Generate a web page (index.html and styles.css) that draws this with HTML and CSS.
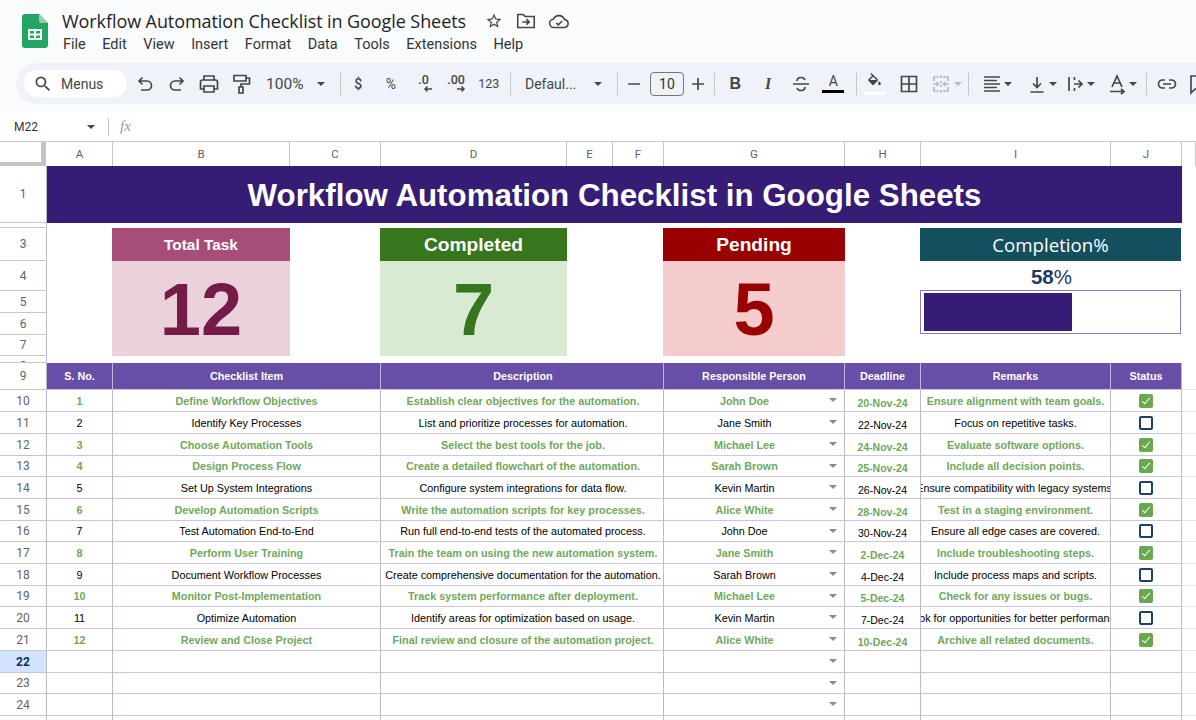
FILE: index.html
```html
<!DOCTYPE html>
<html lang="en">
<head>
  <meta charset="UTF-8">
  <title>Workflow Automation Checklist in Google Sheets</title>
  <link rel="stylesheet" href="styles.css">
</head>
<body>

  <header class="titlebar">
    <svg class="logo" viewBox="0 0 26 34">
      <path d="M3 0h14l9 9v22a3 3 0 0 1-3 3H3a3 3 0 0 1-3-3V3a3 3 0 0 1 3-3z" fill="#23a566"/>
      <path d="M17 0l9 9h-7a2 2 0 0 1-2-2z" fill="#8ed1b1"/>
      <path d="M6 15h14v11H6zM8 17v2.500h4V17zm6 0v2.500h4V17zm-6 4.500V24h4v-2.500zm6 0V24h4v-2.500z" fill="#fff" fill-rule="evenodd"/>
    </svg>
    <div class="docinfo">
      <div class="docname">
        <span class="doctitle">Workflow Automation Checklist in Google Sheets</span>
        <svg class="ico star" viewBox="0 0 24 24"><path d="M22 9.240l-7.190-.62L12 2 9.190 8.630 2 9.240l5.460 4.730L5.820 21 12 17.270 18.180 21l-1.630-7.030L22 9.240zM12 15.400l-3.760 2.270 1-4.280-3.320-2.880 4.380-.38L12 6.100l1.710 4.040 4.380.38-3.320 2.880 1 4.280L12 15.400z"/></svg>
        <svg class="ico line move" viewBox="0 0 24 24"><path d="M3 5h6l2 2h10v12H3zM8 13h7M12.500 10l3 3-3 3"/></svg>
        <svg class="ico line cloud" viewBox="0 0 24 24"><path d="M6.500 19a4.500 4.500 0 0 1-.6-9A6.500 6.500 0 0 1 18 10.500a4.300 4.300 0 0 1 .5 8.500zM9 14l2.200 2.200L15.500 12"/></svg>
      </div>
      <nav class="menus">
        <span>File</span><span>Edit</span><span>View</span><span>Insert</span><span>Format</span><span>Data</span><span>Tools</span><span>Extensions</span><span>Help</span>
      </nav>
    </div>
  </header>

  <div class="toolbar-wrap">
    <div class="toolbar">
      <div class="search">
        <svg class="ico dark" viewBox="0 0 24 24"><path d="M15.500 14h-.79l-.28-.27A6.470 6.470 0 0 0 16 9.500 6.500 6.500 0 1 0 9.500 16c1.610 0 3.090-.59 4.230-1.570l.27.28v.79l5 4.990L20.490 19l-4.990-5zm-6 0C7.010 14 5 11.990 5 9.500S7.010 5 9.500 5 14 7.010 14 9.500 11.990 14 9.500 14z"/></svg>
        <span>Menus</span>
      </div>
      <span class="tool"><svg class="ico line" viewBox="0 0 24 24"><path d="M9.500 5.500L6 9l3.500 3.500M6 9h8a4.500 4.500 0 0 1 0 9H8"/></svg></span>
      <span class="tool"><svg class="ico line" viewBox="0 0 24 24"><path d="M14.500 5.500L18 9l-3.500 3.500M18 9h-8a4.500 4.500 0 0 0 0 9h6"/></svg></span>
      <span class="tool"><svg class="ico line" viewBox="0 0 24 24"><path d="M7 8V4h10v4M7 17H3.500v-7a2 2 0 0 1 2-2h13a2 2 0 0 1 2 2v7H17M7 14h10v6H7z"/></svg></span>
      <span class="tool"><svg class="ico line" viewBox="0 0 24 24"><path d="M5 3.500h12v5.500H5zM17 6h3.500v6h-8.500v3M10 15h4v6h-4z"/></svg></span>
      <span class="tool zoom"><span>100%</span><i class="caret"></i></span>
      <i class="sep sep-zoom"></i>
      <span class="tool num heavy">$</span>
      <span class="tool num">%</span>
      <span class="tool num dec">.0<svg viewBox="0 0 10 8"><path d="M9 4H2M4.500 1.500L2 4l2.500 2.500"/></svg></span>
      <span class="tool num dec">.00<svg viewBox="0 0 10 8"><path d="M1 4h7M5.500 1.500L8 4 5.500 6.500"/></svg></span>
      <span class="tool num small">123</span>
      <i class="sep sep-num"></i>
      <span class="tool font"><span>Defaul...</span><i class="caret"></i></span>
      <i class="sep sep-font"></i>
      <span class="tool"><svg class="ico line" viewBox="0 0 24 24"><path d="M6 12h12"/></svg></span>
      <span class="sizebox">10</span>
      <span class="tool plus"><svg class="ico line" viewBox="0 0 24 24"><path d="M6 12h12M12 6v12"/></svg></span>
      <i class="sep sep-size"></i>
      <span class="tool fmt glyph bold">B</span>
      <span class="tool fmt glyph italic">I</span>
      <span class="tool fmt"><svg class="ico line" viewBox="0 0 24 24"><path d="M4 12h16M8 9C8 6.500 10 5.500 12 5.500s3.500.8 4 2.500M16 15c0 2.500-2 3.500-4 3.500s-3.500-.8-4-2.500"/></svg></span>
      <span class="tool fmt colour"><span>A</span><i class="swatch black"></i></span>
      <i class="sep sep-color"></i>
      <span class="tool cell-tool colour"><svg class="ico dark bucket" viewBox="0 0 24 24"><path d="M16.560 8.940L7.620 0 6.210 1.410l2.380 2.380-5.150 5.150c-.59.59-.59 1.540 0 2.120l5.500 5.500c.29.290.68.440 1.060.440s.77-.15 1.060-.44l5.500-5.500c.59-.58.59-1.530 0-2.120zM5.210 10L10 5.210 14.790 10H5.210zM19 11.500s-2 2.170-2 3.500c0 1.100.9 2 2 2s2-.9 2-2c0-1.330-2-3.500-2-3.500z"/></svg><i class="swatch white"></i></span>
      <span class="tool cell-tool"><svg class="ico line" viewBox="0 0 24 24"><path d="M4.500 4.500h15v15h-15zM12 4.500v15M4.500 12h15"/></svg></span>
      <span class="tool merge"><svg class="ico line off" viewBox="0 0 24 24"><path d="M5 9V5h5M14 5h5v4M5 15v4h5M14 19h5v-4M12 3v3M12 9v2M12 13v2M12 18v3M4 12h5M7.500 10L9.500 12l-2 2M20 12h-5M16.500 10l-2 2 2 2"/></svg><i class="caret off"></i></span>
      <i class="sep sep-merge"></i>
      <span class="tool pick pick-1"><svg class="ico line" viewBox="0 0 24 24"><path d="M4 5h16M4 8.500h13M4 12h16M4 15.500h13M4 19h16"/></svg><i class="caret"></i></span>
      <span class="tool pick pick-2"><svg class="ico line" viewBox="0 0 24 24"><path d="M5.500 20h13M12 5v10M8 11.500l4 4 4-4"/></svg><i class="caret"></i></span>
      <span class="tool pick pick-3"><svg class="ico line" viewBox="0 0 24 24"><path d="M6 5v14M11.500 5v3M11.500 16v3M11 12h8M15.500 8.500L19 12l-3.500 3.500"/></svg><i class="caret"></i></span>
      <span class="tool pick pick-4"><svg class="ico line" viewBox="0 0 24 24"><path d="M7 15l5-11 5 11M9 11h6M5 19.500h13M16 17l3 2.500-3 2.500"/></svg><i class="caret"></i></span>
      <i class="sep sep-pick"></i>
      <span class="tool"><svg class="ico line" viewBox="0 0 24 24"><path d="M10 8H7.500a4 4 0 0 0 0 8H10M14 8h2.500a4 4 0 0 1 0 8H14M8 12h8"/></svg></span>
      <span class="tool"><svg class="ico line" viewBox="0 0 24 24"><path d="M4 4h16v13H8l-4 4zM12 7.500v6M9 10.500h6"/></svg></span>
    </div>
  </div>

  <div class="formulabar">
    <span class="cellref">M22</span>
    <i class="caret"></i>
    <i class="sep"></i>
    <span class="fx">fx</span>
  </div>

  <main class="sheet">
    <div class="colheads">
      <span class="corner"></span>
      <span>A</span><span>B</span><span>C</span><span>D</span><span>E</span><span>F</span><span>G</span><span>H</span><span>I</span><span>J</span><span></span>
    </div>

    <section class="dash">
      <span class="rh r1">1</span>
      <span class="rh r2 cut">2</span>
      <span class="rh r3">3</span>
      <span class="rh r4">4</span>
      <span class="rh r5">5</span>
      <span class="rh r6">6</span>
      <span class="rh r7">7</span>
      <span class="rh r8 cut">8</span>

      <h1 class="banner">Workflow Automation Checklist in Google Sheets</h1>

      <div class="kpi-head total">Total Task</div>
      <div class="kpi-value total">12</div>
      <div class="kpi-head completed">Completed</div>
      <div class="kpi-value completed">7</div>
      <div class="kpi-head pending">Pending</div>
      <div class="kpi-value pending">5</div>

      <div class="kpi-head percent">Completion%</div>
      <div class="percent-value"><b>58</b>%</div>
      <div class="progress"><div class="progress-fill" style="width:58%"></div></div>
    </section>

    <section class="checklist">
      <div class="row head">
        <span class="rh">9</span>
        <span class="cell">S. No.</span><span class="cell wide">Checklist Item</span><span class="cell wider">Description</span><span class="cell">Responsible Person</span><span class="cell">Deadline</span><span class="cell">Remarks</span><span class="cell">Status</span><span class="cell spare"></span>
      </div>
      <div class="row done">
        <span class="rh">10</span>
        <span class="cell">1</span><span class="cell wide">Define Workflow Objectives</span><span class="cell wider">Establish clear objectives for the automation.</span><span class="cell person">John Doe</span><span class="cell date">20-Nov-24</span><span class="cell">Ensure alignment with team goals.</span><span class="cell"><i class="box on"></i></span><span class="cell spare"></span>
      </div>
      <div class="row">
        <span class="rh">11</span>
        <span class="cell">2</span><span class="cell wide">Identify Key Processes</span><span class="cell wider">List and prioritize processes for automation.</span><span class="cell person">Jane Smith</span><span class="cell date">22-Nov-24</span><span class="cell">Focus on repetitive tasks.</span><span class="cell"><i class="box"></i></span><span class="cell spare"></span>
      </div>
      <div class="row done">
        <span class="rh">12</span>
        <span class="cell">3</span><span class="cell wide">Choose Automation Tools</span><span class="cell wider">Select the best tools for the job.</span><span class="cell person">Michael Lee</span><span class="cell date">24-Nov-24</span><span class="cell">Evaluate software options.</span><span class="cell"><i class="box on"></i></span><span class="cell spare"></span>
      </div>
      <div class="row done">
        <span class="rh">13</span>
        <span class="cell">4</span><span class="cell wide">Design Process Flow</span><span class="cell wider">Create a detailed flowchart of the automation.</span><span class="cell person">Sarah Brown</span><span class="cell date">25-Nov-24</span><span class="cell">Include all decision points.</span><span class="cell"><i class="box on"></i></span><span class="cell spare"></span>
      </div>
      <div class="row">
        <span class="rh">14</span>
        <span class="cell">5</span><span class="cell wide">Set Up System Integrations</span><span class="cell wider">Configure system integrations for data flow.</span><span class="cell person">Kevin Martin</span><span class="cell date">26-Nov-24</span><span class="cell">Ensure compatibility with legacy systems.</span><span class="cell"><i class="box"></i></span><span class="cell spare"></span>
      </div>
      <div class="row done">
        <span class="rh">15</span>
        <span class="cell">6</span><span class="cell wide">Develop Automation Scripts</span><span class="cell wider">Write the automation scripts for key processes.</span><span class="cell person">Alice White</span><span class="cell date">28-Nov-24</span><span class="cell">Test in a staging environment.</span><span class="cell"><i class="box on"></i></span><span class="cell spare"></span>
      </div>
      <div class="row">
        <span class="rh">16</span>
        <span class="cell">7</span><span class="cell wide">Test Automation End-to-End</span><span class="cell wider">Run full end-to-end tests of the automated process.</span><span class="cell person">John Doe</span><span class="cell date">30-Nov-24</span><span class="cell">Ensure all edge cases are covered.</span><span class="cell"><i class="box"></i></span><span class="cell spare"></span>
      </div>
      <div class="row done">
        <span class="rh">17</span>
        <span class="cell">8</span><span class="cell wide">Perform User Training</span><span class="cell wider">Train the team on using the new automation system.</span><span class="cell person">Jane Smith</span><span class="cell date">2-Dec-24</span><span class="cell">Include troubleshooting steps.</span><span class="cell"><i class="box on"></i></span><span class="cell spare"></span>
      </div>
      <div class="row">
        <span class="rh">18</span>
        <span class="cell">9</span><span class="cell wide">Document Workflow Processes</span><span class="cell wider">Create comprehensive documentation for the automation.</span><span class="cell person">Sarah Brown</span><span class="cell date">4-Dec-24</span><span class="cell">Include process maps and scripts.</span><span class="cell"><i class="box"></i></span><span class="cell spare"></span>
      </div>
      <div class="row done">
        <span class="rh">19</span>
        <span class="cell">10</span><span class="cell wide">Monitor Post-Implementation</span><span class="cell wider">Track system performance after deployment.</span><span class="cell person">Michael Lee</span><span class="cell date">5-Dec-24</span><span class="cell">Check for any issues or bugs.</span><span class="cell"><i class="box on"></i></span><span class="cell spare"></span>
      </div>
      <div class="row">
        <span class="rh">20</span>
        <span class="cell">11</span><span class="cell wide">Optimize Automation</span><span class="cell wider">Identify areas for optimization based on usage.</span><span class="cell person">Kevin Martin</span><span class="cell date">7-Dec-24</span><span class="cell">Look for opportunities for better performance.</span><span class="cell"><i class="box"></i></span><span class="cell spare"></span>
      </div>
      <div class="row done">
        <span class="rh">21</span>
        <span class="cell">12</span><span class="cell wide">Review and Close Project</span><span class="cell wider">Final review and closure of the automation project.</span><span class="cell person">Alice White</span><span class="cell date">10-Dec-24</span><span class="cell">Archive all related documents.</span><span class="cell"><i class="box on"></i></span><span class="cell spare"></span>
      </div>
      <div class="row">
        <span class="rh active">22</span>
        <span class="cell"></span><span class="cell wide"></span><span class="cell wider"></span><span class="cell person"></span><span class="cell"></span><span class="cell"></span><span class="cell"></span><span class="cell spare"></span>
      </div>
      <div class="row">
        <span class="rh">23</span>
        <span class="cell"></span><span class="cell wide"></span><span class="cell wider"></span><span class="cell person"></span><span class="cell"></span><span class="cell"></span><span class="cell"></span><span class="cell spare"></span>
      </div>
      <div class="row">
        <span class="rh">24</span>
        <span class="cell"></span><span class="cell wide"></span><span class="cell wider"></span><span class="cell person"></span><span class="cell"></span><span class="cell"></span><span class="cell"></span><span class="cell spare"></span>
      </div>
      <div class="row">
        <span class="rh"></span>
        <span class="cell"></span><span class="cell wide"></span><span class="cell wider"></span><span class="cell"></span><span class="cell"></span><span class="cell"></span><span class="cell"></span><span class="cell spare"></span>
      </div>
    </section>
  </main>

</body>
</html>
```

FILE: styles.css
```css
:root {
  --cols: 47px 66px 177px 91px 186px 46px 51px 181px 76px 190px 71px 14px;
  --grid: #c9c6e0;
  --grid-v: #bdb8da;
  --head-line: #c7c7c7;
  --green: #6fa85a;
  --chrome: #f9fbfd;
}

html, body {
  margin: 0;
  height: 720px;
  overflow: hidden;
  background: #fff;
  font-family: "Liberation Sans", Arial, sans-serif;
}

/* title bar */
.titlebar {
  display: flex;
  height: 63px;
  padding-left: 22px;
  background: var(--chrome);
  box-sizing: border-box;
}

.logo {
  width: 26px;
  height: 34px;
  margin-top: 14px;
}

.docinfo {
  margin-left: 14px;
  padding-top: 9px;
  font-family: "Open Sans", sans-serif;
  color: #1f1f1f;
}

.docname {
  display: flex;
  align-items: center;
  height: 24px;
}

.doctitle {
  font-size: 18px;
  letter-spacing: -0.08px;
  margin-right: 19px;
}

.docname .star { width: 18px; height: 18px; margin-right: 12px; }
.docname .move { width: 22px; height: 22px; margin-right: 11px; stroke-width: 1.6; }
.docname .cloud { width: 22px; height: 22px; stroke-width: 1.6; }

.menus {
  display: flex;
  gap: 16.5px;
  margin-top: 2px;
  margin-left: 1px;
  font-family: Roboto, sans-serif;
  font-size: 14.5px;
  line-height: 20px;
  color: #333;
}

.ico {
  width: 24px;
  height: 24px;
  fill: #444746;
  flex: none;
}

.ico.line {
  fill: none;
  stroke: #444746;
  stroke-width: 1.7;
}

.ico.off {
  stroke: #b8bcc2;
}

/* toolbar */
.toolbar-wrap {
  height: 49px;
  padding-left: 16px;
  background: var(--chrome);
}

.toolbar {
  display: flex;
  align-items: center;
  height: 41px;
  padding-left: 8px;
  background: #eff3f9;
  border-radius: 21px 0 0 21px;
  white-space: nowrap;
  overflow: hidden;
  color: #444746;
}

.search {
  display: flex;
  align-items: center;
  gap: 8px;
  width: 103px;
  height: 27px;
  margin-right: 2px;
  padding-left: 9px;
  box-sizing: border-box;
  background: #fff;
  border-radius: 14px;
  font-family: Roboto, sans-serif;
  font-size: 14px;
  flex: none;
}

.search .ico {
  width: 20px;
  height: 20px;
}

.tool {
  display: flex;
  align-items: center;
  justify-content: center;
  width: 32px;
  height: 28px;
  flex: none;
  font-family: Roboto, sans-serif;
  font-size: 14px;
}

.caret {
  display: inline-block;
  width: 0;
  height: 0;
  border-left: 4px solid transparent;
  border-right: 4px solid transparent;
  border-top: 4px solid #444746;
  flex: none;
}

.caret.off {
  border-top-color: #b8bcc2;
}

.sep {
  width: 1px;
  height: 22px;
  background: #c7c7c7;
  flex: none;
}

.sep-zoom { margin: 0 1px 0 6px; }
.sep-num { margin: 0 1px 0 5px; }
.sep-font { margin: 0 0 0 5px; }
.sep-size { margin: 0 4px 0 2px; }
.sep-color { margin: 0 1px 0 6px; }
.sep-merge { margin: 0 11px 0 0; }
.sep-pick { margin: 0 4px 0 0; }

.zoom {
  width: 77px;
  justify-content: space-between;
  padding: 0 9px 0 9px;
  box-sizing: border-box;
  font-size: 15.5px;
}

.num {
  width: 32.6px;
  font-size: 14px;
}

.num.heavy { font-weight: 500; }
.num.small { font-size: 12.5px; }

.dec {
  flex-direction: column;
  font-weight: 500;
  font-size: 12.5px;
  line-height: 11px;
}

.dec svg {
  width: 10px;
  height: 8px;
  margin-left: 10px;
  fill: none;
  stroke: #444746;
  stroke-width: 1.5;
}

.font {
  width: 100px;
  justify-content: space-between;
  padding: 0 10px 0 13px;
  box-sizing: border-box;
  font-size: 14px;
}

.plus { width: 28px; }

.sizebox {
  width: 34px;
  height: 24px;
  box-sizing: border-box;
  border: 1px solid #747775;
  border-radius: 4px;
  text-align: center;
  font-family: Roboto, sans-serif;
  font-size: 14px;
  line-height: 22px;
  flex: none;
  color: #333;
}

.fmt { width: 32.7px; }
.glyph { font-size: 16px; }
.bold { font-family: "Liberation Sans", sans-serif; font-weight: bold; }
.italic { font-family: "Liberation Serif", serif; font-style: italic; font-weight: bold; }

.colour {
  flex-direction: column;
  font-size: 14px;
  line-height: 14px;
}

.swatch {
  display: block;
  width: 22px;
  height: 3px;
  margin-top: 2px;
}

.swatch.black { background: #000; }
.swatch.white { background: #fff; }

.cell-tool { width: 34px; }

.colour .bucket {
  width: 17px;
  height: 17px;
}

.merge {
  width: 42px;
  gap: 1px;
  justify-content: flex-start;
  padding-left: 3px;
  box-sizing: border-box;
}

.pick {
  justify-content: flex-start;
}

.pick-1 { width: 45px; }
.pick-2 { width: 38px; }
.pick-3 { width: 42px; }
.pick-4 { width: 41px; }

/* formula bar */
.formulabar {
  display: flex;
  align-items: center;
  height: 30px;
  padding-left: 14px;
  box-sizing: border-box;
  border-bottom: 1px solid var(--head-line);
  font-family: Roboto, sans-serif;
  font-size: 12px;
  color: #333;
}

.cellref { width: 73px; }

.formulabar .sep {
  margin: 0 0 0 13px;
  height: 18px;
}

.fx {
  margin-left: 11px;
  font-family: "Liberation Serif", serif;
  font-style: italic;
  font-size: 15px;
  color: #9a9a9a;
}

/* sheet */
.colheads {
  display: grid;
  grid-template-columns: var(--cols);
  height: 24px;
  font-family: Roboto, sans-serif;
  font-size: 11.5px;
  color: #5f6368;
}

.colheads span {
  display: flex;
  align-items: center;
  justify-content: center;
  box-sizing: border-box;
  border-right: 1px solid var(--head-line);
}

.colheads .corner {
  border-right: 5px solid #c4c4c4;
  border-bottom: 4px solid #c4c4c4;
  margin-right: 1px;
}

.rh {
  display: flex;
  align-items: center;
  justify-content: center;
  grid-column: 1;
  box-sizing: border-box;
  border-right: 1px solid var(--grid-v);
  border-bottom: 1px solid var(--head-line);
  overflow: hidden;
  font-family: Roboto, sans-serif;
  font-size: 12px;
  color: #5f6368;
}

.rh.cut {
  align-items: flex-start;
  padding-top: 3px;
}

.rh.active {
  background: #d3e3fd;
  font-weight: bold;
  color: #0b2f66;
}

.dash {
  display: grid;
  grid-template-columns: var(--cols);
  grid-template-rows: 57px 5px 33px 30px 22px 22px 21px 7px;
}

.r1 { grid-row: 1; }
.r2 { grid-row: 2; }
.r3 { grid-row: 3; }
.r4 { grid-row: 4; }
.r5 { grid-row: 5; }
.r6 { grid-row: 6; }
.r7 { grid-row: 7; }
.r8 { grid-row: 8; }

.banner {
  grid-column: 2 / 12;
  grid-row: 1;
  display: flex;
  align-items: center;
  justify-content: center;
  margin: 0;
  padding-top: 3px;
  background: #351c75;
  color: #fff;
  font-size: 31.3px;
  font-weight: bold;
}

.kpi-head,
.kpi-value {
  display: flex;
  align-items: center;
  justify-content: center;
  margin-left: -1px;
}

.kpi-head {
  grid-row: 3;
  padding-top: 1px;
  color: #fff;
  font-size: 19.2px;
  font-weight: bold;
}

.kpi-value {
  grid-row: 4 / 8;
  font-size: 74px;
  font-weight: bold;
  padding-top: 2px;
}

.total { grid-column: 3; }
.completed { grid-column: 5; }
.pending { grid-column: 8; }

.kpi-head.total { background: #a64d79; font-size: 15.4px; }
.kpi-value.total { background: #ead1dc; color: #741b47; }
.kpi-head.completed { background: #38761d; }
.kpi-value.completed { background: #d9ead3; color: #38761d; }
.kpi-head.pending { background: #990000; }
.kpi-value.pending { background: #f4cccc; color: #990000; }

.kpi-head.percent {
  grid-column: 10 / 12;
  margin-right: 1px;
  padding-top: 0;
  background: #134f5c;
  font-family: "Open Sans", sans-serif;
  font-size: 18.7px;
  font-weight: normal;
}

.percent-value {
  grid-column: 10 / 12;
  grid-row: 4;
  padding-top: 4px;
  text-align: center;
  font-size: 20.5px;
  color: #1c3a64;
}

.progress {
  grid-column: 10 / 12;
  grid-row: 5 / 7;
  margin: -1px 1px 1px -1px;
  padding: 2px 1px 2px 3px;
  border: 1px solid #8e7cc3;
  background: #fff;
  box-sizing: border-box;
}

.progress-fill {
  height: 100%;
  background: #351c75;
}

/* checklist table */
.checklist {
  display: grid;
  grid-template-columns: var(--cols);
  grid-template-rows: 27px 22px 22px 22px 21px 22px 22px 21px 22px 22px 21px 22px 22px 22px 21px 22px 8px;
}

.row {
  display: contents;
}

.cell {
  display: flex;
  align-items: center;
  justify-content: center;
  position: relative;
  overflow: hidden;
  white-space: nowrap;
  box-sizing: border-box;
  border-right: 1px solid var(--grid-v);
  border-bottom: 1px solid var(--grid);
  font-size: 10.8px;
  color: #000;
}

.cell.wide { grid-column: span 2; }
.cell.wider { grid-column: span 3; padding-left: 2px; }

.cell.spare {
  border-right: none;
  border-bottom-color: #e3e3e3;
}

.head .cell {
  background: #674ea7;
  color: #fff;
  font-weight: bold;
}

.head .spare { background: #fff; }

.done .cell {
  color: var(--green);
  font-weight: bold;
}

.person {
  padding-right: 19px;
}

.person::after {
  content: "";
  position: absolute;
  right: 7px;
  top: 8px;
  border-left: 4px solid transparent;
  border-right: 4px solid transparent;
  border-top: 4px solid #8a8a8a;
}

.cell.date {
  align-items: flex-end;
  padding-bottom: 2px;
  font-size: 10.5px;
}

.box {
  display: block;
  position: relative;
  width: 14px;
  height: 14px;
  box-sizing: border-box;
  border: 2px solid #1c4066;
  border-radius: 2px;
}

.box.on {
  background: #6aa84f;
  border-color: #6aa84f;
}

.box.on::after {
  content: "";
  position: absolute;
  left: 3px;
  top: 0;
  width: 3px;
  height: 7px;
  border-right: 1.5px solid #fff;
  border-bottom: 1.5px solid #fff;
  transform: rotate(40deg);
}
```
